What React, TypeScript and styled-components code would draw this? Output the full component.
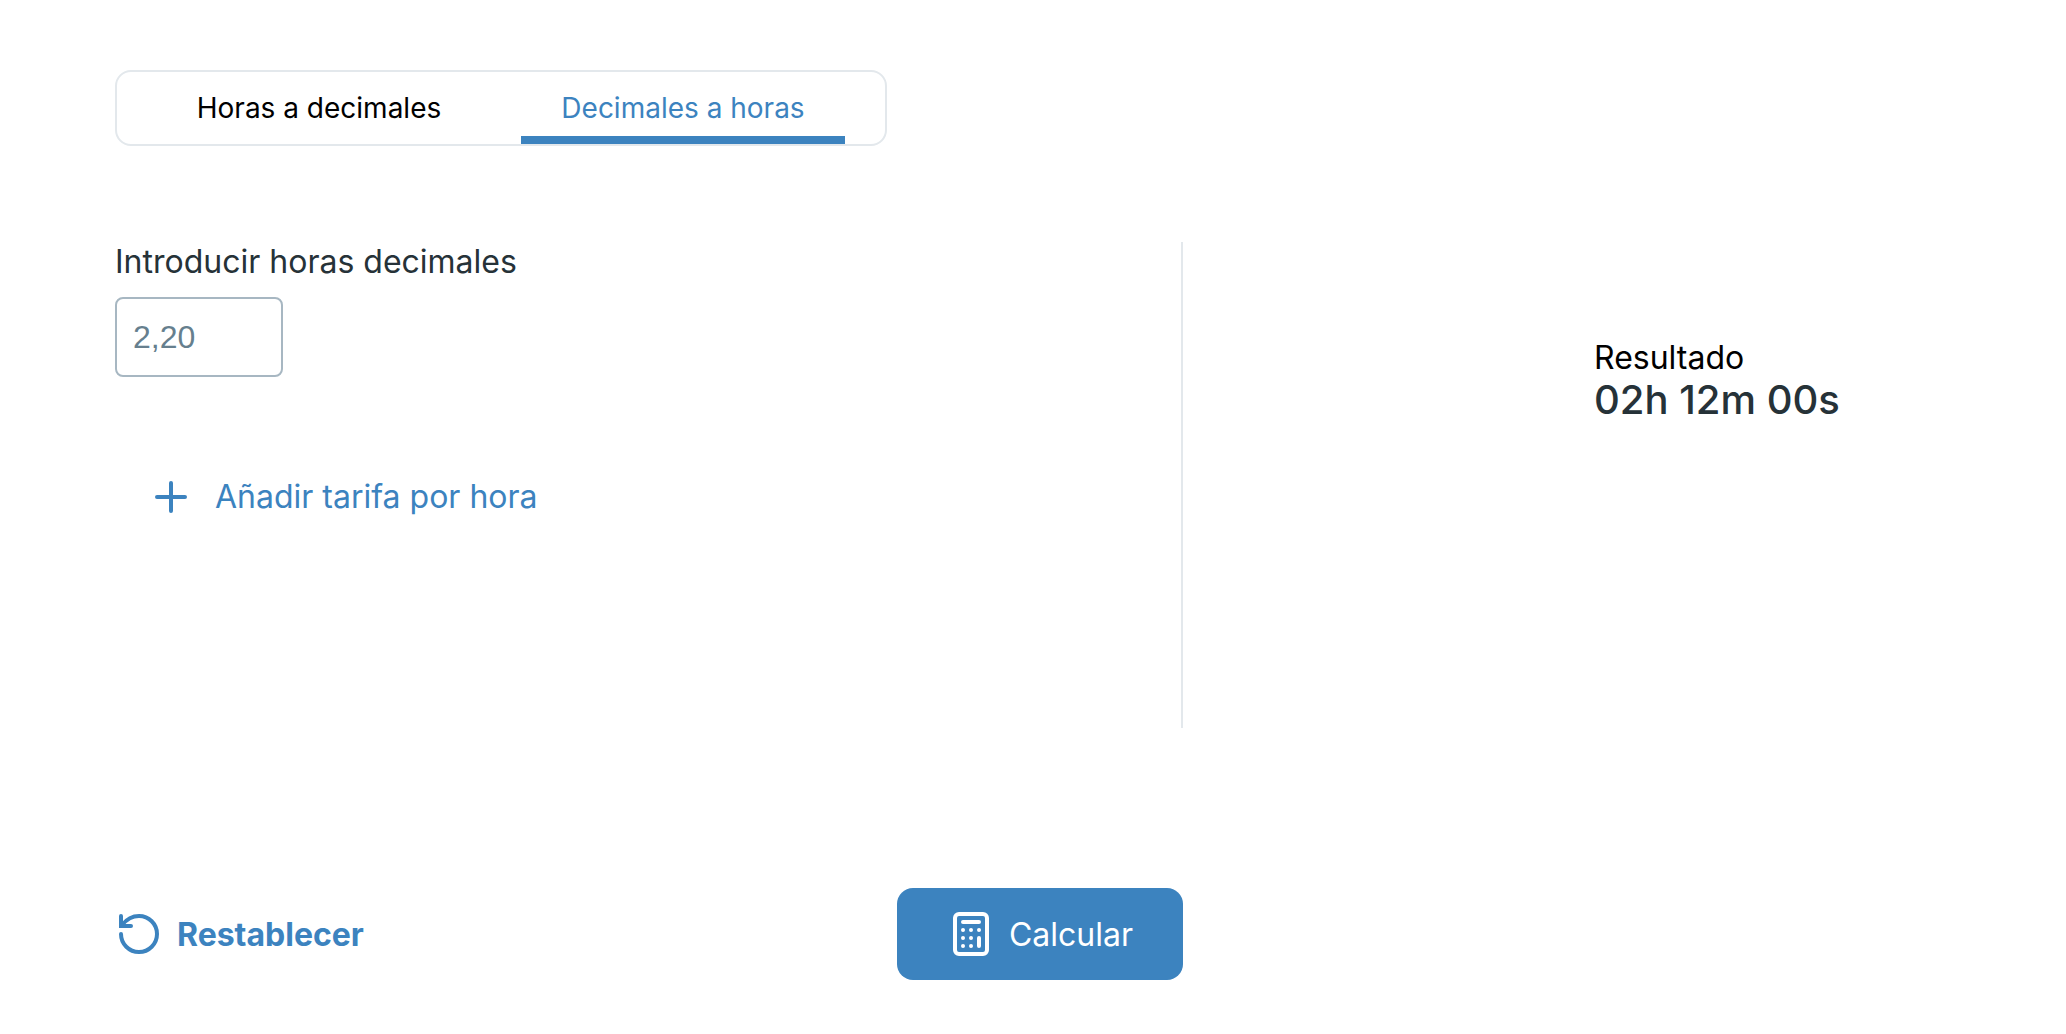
import React, { useState } from "react";
import styled, { createGlobalStyle } from "styled-components";

const blue = "#3c83bf";
const ink = "#263238";
const line = "#e3e8ec";

const GlobalStyle = createGlobalStyle`
  *, *::before, *::after { box-sizing: border-box; }
  body {
    margin: 0;
    background: #fff;
    color: #000;
    font-family: Inter, "Liberation Sans", sans-serif;
  }
  button, input { font: inherit; }
  button { cursor: pointer; }
`;

const Page = styled.main`
  padding: 70px 115px 54px;
`;

const Tabs = styled.div`
  display: flex;
  gap: 40px;
  width: 42%;
  min-width: 772px;
  height: 76px;
  padding: 0 40px;
  border: 2px solid ${line};
  border-radius: 16px;
`;

const Tab = styled.button<{ $active: boolean }>`
  flex: 1;
  padding: 8px 0 0;
  border: 0;
  border-bottom: 8px solid ${(p) => (p.$active ? blue : "transparent")};
  background: none;
  color: ${(p) => (p.$active ? blue : "#000")};
  font-size: 28px;
  line-height: 40px;
  white-space: nowrap;
`;

const Columns = styled.div`
  display: grid;
  grid-template-columns: 89fr 64fr;
  margin-top: 96px;
`;

const Entry = styled.section`
  display: flex;
  flex-direction: column;
  align-items: flex-start;
  min-height: 486px;
  border-right: 2px solid ${line};
`;

const Label = styled.label`
  color: ${ink};
  font-size: 32px;
  line-height: 40px;
`;

const DecimalInput = styled.input`
  width: 168px;
  height: 80px;
  margin-top: 15px;
  padding: 0 16px;
  border: 2px solid #a7b7c2;
  border-radius: 8px;
  background: #fff;
  color: ${ink};
  font-family: "Liberation Sans", Arial, sans-serif;
  font-size: 32px;
  &::placeholder { color: #667f8e; opacity: 1; }
`;

const AddRate = styled.button`
  display: flex;
  align-items: center;
  gap: 28px;
  margin-top: 96px;
  padding: 0 40px;
  border: 0;
  background: none;
  color: ${blue};
  font-size: 32px;
  line-height: 48px;
`;

const Result = styled.section`
  display: flex;
  flex-direction: column;
  align-items: flex-start;
  justify-self: end;
  width: 357px;
  padding-top: 96px;
`;

const ResultTitle = styled.span`
  font-size: 32px;
  line-height: 40px;
`;

const ResultValue = styled.output`
  color: ${ink};
  font-size: 40px;
  font-weight: 500;
  line-height: 44px;
  white-space: nowrap;
`;

const Actions = styled.div`
  display: grid;
  grid-template-columns: 89fr 64fr;
  margin-top: 160px;
`;

const ActionBar = styled.div`
  display: flex;
  align-items: center;
  justify-content: space-between;
`;

const ActionText = styled.span`
  padding-top: 2px;
  line-height: 48px;
`;

const ResetButton = styled.button`
  display: flex;
  align-items: center;
  gap: 16px;
  padding: 0;
  border: 0;
  background: none;
  color: ${blue};
  font-size: 32px;
  font-weight: 700;
`;

const CalculateButton = styled.button`
  display: flex;
  align-items: center;
  gap: 14px;
  height: 92px;
  padding: 0 50px;
  border: 0;
  border-radius: 16px;
  background: ${blue};
  color: #fff;
  font-size: 32px;
`;

const PlusIcon = () => (
  <svg width="32" height="32" viewBox="0 0 32 32" fill="none" stroke="currentColor" strokeWidth="4" strokeLinecap="round" aria-hidden="true">
    <path d="M16 2v28M2 16h28" />
  </svg>
);

const ResetIcon = () => (
  <svg width="46" height="48" viewBox="0 0 46 48" fill="none" stroke="currentColor" strokeWidth="4" strokeLinecap="round" strokeLinejoin="miter" aria-hidden="true">
    <path d="M6 24a18 18 0 1 0 18-18c-7 0-13 4-17 9" />
    <path d="M6 6v10h10" />
  </svg>
);

const CalculatorIcon = () => (
  <svg width="48" height="48" viewBox="0 0 48 48" fill="none" stroke="currentColor" strokeWidth="4" strokeLinecap="round" strokeLinejoin="round" aria-hidden="true">
    <rect x="8" y="4" width="32" height="40" rx="4" />
    <path d="M16 12h16M32 28v8" />
    <path d="M16 20h.01M24 20h.01M32 20h.01M16 28h.01M24 28h.01M16 36h.01M24 36h.01" />
  </svg>
);

const toClock = (text: string) => {
  const hours = Number(text.replace(",", ".")) || 0;
  const seconds = Math.round(hours * 3600);
  const pad = (n: number) => String(n).padStart(2, "0");
  return `${pad(Math.floor(seconds / 3600))}h ${pad(Math.floor(seconds / 60) % 60)}m ${pad(seconds % 60)}s`;
};

const tabs = ["Horas a decimales", "Decimales a horas"];

export default function App() {
  const [active, setActive] = useState(1);
  const [value, setValue] = useState("");
  const [result, setResult] = useState(toClock("2,20"));

  return (
    <>
      <GlobalStyle />
      <Page>
        <Tabs role="tablist">
          {tabs.map((name, i) => (
            <Tab key={name} type="button" role="tab" aria-selected={i === active} $active={i === active} onClick={() => setActive(i)}>
              {name}
            </Tab>
          ))}
        </Tabs>
        <Columns>
          <Entry>
            <Label htmlFor="decimal-hours">Introducir horas decimales</Label>
            <DecimalInput
              id="decimal-hours"
              inputMode="decimal"
              placeholder="2,20"
              value={value}
              onChange={(e) => setValue(e.target.value)}
            />
            <AddRate type="button">
              <PlusIcon />
              Añadir tarifa por hora
            </AddRate>
          </Entry>
          <Result>
            <ResultTitle>Resultado</ResultTitle>
            <ResultValue htmlFor="decimal-hours">{result}</ResultValue>
          </Result>
        </Columns>
        <Actions>
          <ActionBar>
            <ResetButton
              type="button"
              onClick={() => {
                setValue("");
                setResult(toClock("2,20"));
              }}
            >
              <ResetIcon />
              <ActionText>Restablecer</ActionText>
            </ResetButton>
            <CalculateButton type="button" onClick={() => setResult(toClock(value || "2,20"))}>
              <CalculatorIcon />
              <ActionText>Calcular</ActionText>
            </CalculateButton>
          </ActionBar>
        </Actions>
      </Page>
    </>
  );
}
